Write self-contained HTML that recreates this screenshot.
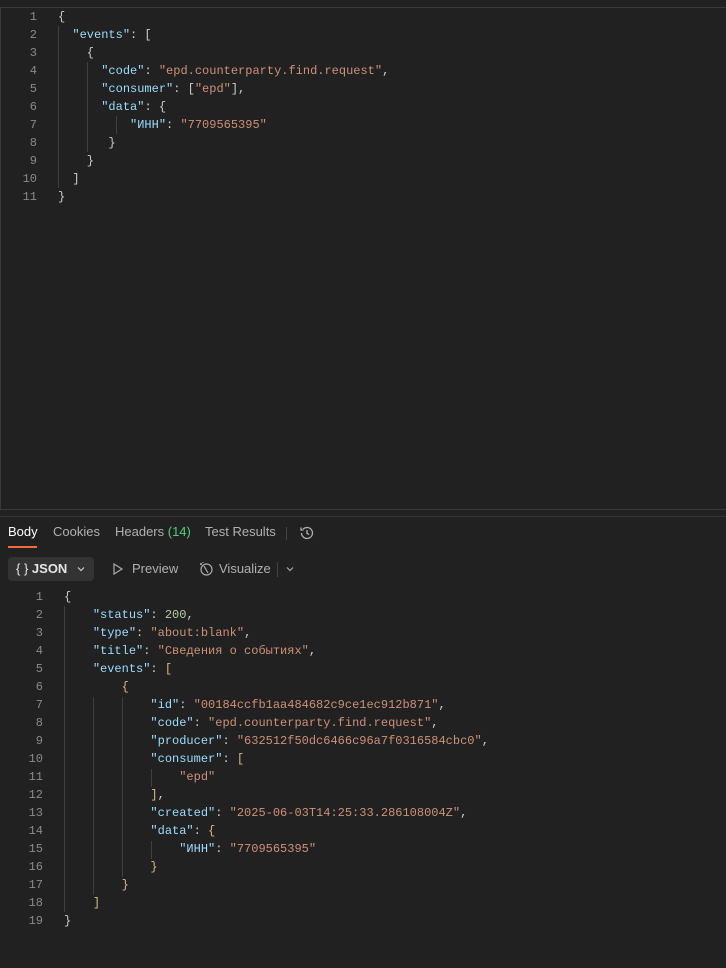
<!DOCTYPE html>
<html><head><meta charset="utf-8"><style>
body{margin:0;width:726px;height:968px;background:#212121;overflow:hidden;position:relative;font-family:"Liberation Sans",sans-serif}
.code{position:absolute;font-family:"Liberation Mono",monospace;font-size:12px;line-height:18px;white-space:pre;color:#cccccc}
.ln{position:absolute;font-family:"Liberation Mono",monospace;font-size:12px;line-height:18px;text-align:right;color:#8a8a8a;white-space:pre}
.k{color:#9cdcfe}.s{color:#ce9178}.n{color:#b5cea8}.b{color:#d7ba7d}
.g{position:absolute;width:1px;background:#404040}
</style></head><body>
<div style="position:absolute;left:0;top:7px;width:726px;height:503px;border-top:1px solid #3a3a3a;border-left:1px solid #3a3a3a;border-bottom:1px solid #3a3a3a;box-sizing:border-box"></div>
<div style="position:absolute;left:0;top:516px;width:726px;height:1px;background:#333"></div>

<div class="ln" style="left:10px;top:8px;width:27px">1
2
3
4
5
6
7
8
9
10
11</div>
<div class="g" style="left:58px;top:26px;height:162px"></div>
<div class="g" style="left:87px;top:62px;height:90px"></div>
<div class="g" style="left:116px;top:116px;height:18px"></div>
<div class="code" style="left:58px;top:8px">{
  <span class="k">"events"</span>: [
    {
      <span class="k">"code"</span>: <span class="s">"epd.counterparty.find.request"</span>,
      <span class="k">"consumer"</span>: [<span class="s">"epd"</span>],
      <span class="k">"data"</span>: {
          <span class="k">"ИНН"</span>: <span class="s">"7709565395"</span>
       }
    }
  ]
}</div>

<div style="position:absolute;left:8px;top:524px;font-size:13px;color:#fff">Body</div>
<div style="position:absolute;left:8px;top:546px;width:29px;height:2px;background:#f26b3a"></div>
<div style="position:absolute;left:53px;top:524px;font-size:13px;color:#b0b0b0">Cookies</div>
<div style="position:absolute;left:115px;top:524px;font-size:13px;color:#b0b0b0">Headers <span style="color:#4fcf7a">(14)</span></div>
<div style="position:absolute;left:205px;top:524px;font-size:13px;color:#b0b0b0">Test Results</div>
<div style="position:absolute;left:286px;top:527px;width:1px;height:13px;background:#444"></div>
<svg style="position:absolute;left:299px;top:525px" width="16" height="16" viewBox="0 0 16 16" fill="none" stroke="#b0b0b0" stroke-width="1.3"><path d="M2.5 8a5.5 5.5 0 1 0 1.6-3.9"/><path d="M2 2.5v2.5h2.5"/><path d="M8 5v3.3l2 1.3"/></svg>

<div style="position:absolute;left:8px;top:557px;width:86px;height:24px;background:#333;border-radius:4px"></div>
<div style="position:absolute;left:16px;top:561px;font-size:13px;color:#e6e6e6">{ } <b style="font-weight:bold">JSON</b></div>
<svg style="position:absolute;left:76px;top:564px" width="10" height="10" viewBox="0 0 10 10" fill="none" stroke="#ccc" stroke-width="1.2"><path d="M2 3.5l3 3 3-3"/></svg>
<svg style="position:absolute;left:112px;top:562px" width="12" height="14" viewBox="0 0 12 14" fill="none" stroke="#aaa" stroke-width="1.2"><path d="M2 2l8 5-8 5z"/></svg>
<div style="position:absolute;left:132px;top:561px;font-size:13px;color:#b0b0b0">Preview</div>
<svg style="position:absolute;left:197px;top:560px" width="18" height="18" viewBox="0 0 18 18" fill="none" stroke="#aaa" stroke-width="1.2"><circle cx="9.5" cy="9.5" r="5.5"/><path d="M7 6l4 7M3 4h2M4 3v2M6 2v1"/></svg>
<div style="position:absolute;left:219px;top:561px;font-size:13px;color:#b0b0b0">Visualize</div>
<div style="position:absolute;left:277px;top:562px;width:1px;height:15px;background:#444"></div>
<svg style="position:absolute;left:285px;top:564px" width="10" height="10" viewBox="0 0 10 10" fill="none" stroke="#aaa" stroke-width="1.2"><path d="M2 3.5l3 3 3-3"/></svg>

<div class="ln" style="left:10px;top:588px;width:33px">1
2
3
4
5
6
7
8
9
10
11
12
13
14
15
16
17
18
19</div>
<div class="g" style="left:64px;top:606px;height:306px"></div>
<div class="g" style="left:93px;top:697px;height:198px"></div>
<div class="g" style="left:122px;top:697px;height:180px"></div>
<div class="g" style="left:151px;top:769px;height:18px"></div>
<div class="g" style="left:151px;top:841px;height:18px"></div>
<div class="code" style="left:64px;top:588px">{
    <span class="k">"status"</span>: <span class="n">200</span>,
    <span class="k">"type"</span>: <span class="s">"about:blank"</span>,
    <span class="k">"title"</span>: <span class="s">"Сведения о событиях"</span>,
    <span class="k">"events"</span>: <span class="b">[</span>
        <span class="b">{</span>
            <span class="k">"id"</span>: <span class="s">"00184ccfb1aa484682c9ce1ec912b871"</span>,
            <span class="k">"code"</span>: <span class="s">"epd.counterparty.find.request"</span>,
            <span class="k">"producer"</span>: <span class="s">"632512f50dc6466c96a7f0316584cbc0"</span>,
            <span class="k">"consumer"</span>: <span class="b">[</span>
                <span class="s">"epd"</span>
            <span class="b">]</span>,
            <span class="k">"created"</span>: <span class="s">"2025-06-03T14:25:33.286108004Z"</span>,
            <span class="k">"data"</span>: <span class="b">{</span>
                <span class="k">"ИНН"</span>: <span class="s">"7709565395"</span>
            <span class="b">}</span>
        <span class="b">}</span>
    <span class="b">]</span>
}</div>
</body></html>
